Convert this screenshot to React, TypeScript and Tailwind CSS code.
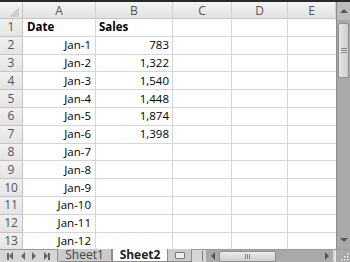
import React from "react";

const cols = ["A", "B", "C", "D", "E"];
const data: [string, string][] = [
  ["Date", "Sales"],
  ["Jan-1", "783"],
  ["Jan-2", "1,322"],
  ["Jan-3", "1,540"],
  ["Jan-4", "1,448"],
  ["Jan-5", "1,874"],
  ["Jan-6", "1,398"],
  ["Jan-7", ""],
  ["Jan-8", ""],
  ["Jan-9", ""],
  ["Jan-10", ""],
  ["Jan-11", ""],
  ["Jan-12", ""],
];

const gridCols = "grid grid-cols-[23px_73px_77px_59px_56px_1fr]";

function HeaderRow() {
  return (
    <div className={`${gridCols} h-[17px] shrink-0 bg-gradient-to-b from-[#f4f4f4] to-[#e2e2e2] border-b border-[#c4c4c4]`}>
      <div className="relative border-r border-[#c4c4c4]">
        <div className="absolute right-[3px] bottom-[3px] w-0 h-0 border-l-[10px] border-l-transparent border-b-[10px] border-b-[#cfcfcf]" />
      </div>
      {cols.map((c) => (
        <div key={c} className="flex items-center justify-center border-r border-[#d0d0d0] text-[#555] text-[12px]">
          {c}
        </div>
      ))}
    </div>
  );
}

function Row({ n, a, b }: { n: number; a: string; b: string }) {
  const head = n === 1;
  return (
    <div className={`${gridCols} h-[17.8px] shrink-0 leading-[14px]`}>
      <div className="flex items-center justify-center bg-gradient-to-b from-[#f0f0f0] to-[#e4e4e4] border-r border-b border-[#c4c4c4] text-[#555] text-[12px]">
        {n}
      </div>
      <div className={`flex items-center px-[4px] border-r border-b border-[#d6d6d6] ${head ? "justify-start font-bold" : "justify-end"}`}>
        {a}
      </div>
      <div className={`flex items-center px-[3px] border-r border-b border-[#d6d6d6] ${head ? "justify-start font-bold" : "justify-end"}`}>
        {b}
      </div>
      <div className="border-r border-b border-[#d6d6d6]" />
      <div className="border-r border-b border-[#d6d6d6]" />
      <div className="border-b border-[#d6d6d6]" />
    </div>
  );
}

function VScroll() {
  return (
    <div className="w-[14px] flex flex-col bg-[#a9a9a9] border-l border-[#8c8c8c]">
      <div className="h-[18px] flex items-center justify-center bg-[#bdbdbd]">
        <div className="w-0 h-0 border-l-[4px] border-r-[4px] border-b-[4px] border-l-transparent border-r-transparent border-b-[#555]" />
      </div>
      <div className="mt-[3px] mx-[1px] h-[55px] rounded-[2px] bg-gradient-to-r from-[#e6e6e6] to-[#cfcfcf] border border-[#8e8e8e] flex flex-col items-center justify-center gap-[1px]">
        <div className="w-[6px] h-px bg-[#888]" />
        <div className="w-[6px] h-px bg-[#888]" />
        <div className="w-[6px] h-px bg-[#888]" />
      </div>
      <div className="flex-1" />
      <div className="h-[18px] flex items-center justify-center">
        <div className="w-0 h-0 border-l-[4px] border-r-[4px] border-t-[4px] border-l-transparent border-r-transparent border-t-[#555]" />
      </div>
    </div>
  );
}

function BottomBar() {
  return (
    <div className="h-[13px] shrink-0 flex bg-[#d6d6d6] border-t border-[#9a9a9a] text-[12px] leading-none">
      <div className="w-[57px] flex items-center justify-around px-[3px] text-[#666]">
        <div className="flex items-center">
          <div className="w-[2px] h-[7px] bg-[#666]" />
          <div className="w-0 h-0 border-t-[4px] border-b-[4px] border-r-[4px] border-t-transparent border-b-transparent border-r-[#666]" />
        </div>
        <div className="w-0 h-0 border-t-[4px] border-b-[4px] border-r-[4px] border-t-transparent border-b-transparent border-r-[#666]" />
        <div className="w-0 h-0 border-t-[4px] border-b-[4px] border-l-[4px] border-t-transparent border-b-transparent border-l-[#666]" />
        <div className="flex items-center">
          <div className="w-0 h-0 border-t-[4px] border-b-[4px] border-l-[4px] border-t-transparent border-b-transparent border-l-[#666]" />
          <div className="w-[2px] h-[7px] bg-[#666]" />
        </div>
      </div>
      <div className="w-[55px] -mt-px flex items-center justify-center bg-[#cbcbcb] border border-t-0 border-[#8d8d8d] rounded-b-[2px] text-[#444]">
        Sheet1
      </div>
      <div className="w-[56px] -mt-px flex items-center justify-center bg-white border border-t-0 border-[#8d8d8d] font-bold text-[#222]">
        Sheet2
      </div>
      <div className="w-[24px] -mt-px flex items-center justify-center bg-[#cbcbcb] border border-t-0 border-l-0 border-[#8d8d8d]">
        <div className="w-[10px] h-[7px] border border-[#777] rounded-[1px] bg-[#eee]" />
      </div>
      <div className="flex-1" />
      <div className="w-px my-[1px] bg-[#777]" />
      <div className="w-[127px] ml-[3px] flex items-center bg-[#a9a9a9]">
        <div className="w-[13px] flex items-center justify-center">
          <div className="w-0 h-0 border-t-[4px] border-b-[4px] border-r-[4px] border-t-transparent border-b-transparent border-r-[#555]" />
        </div>
        <div className="w-[57px] h-[11px] rounded-[2px] bg-gradient-to-b from-[#ececec] to-[#cdcdcd] border border-[#8e8e8e] flex items-center justify-center gap-[1px]">
          <div className="w-px h-[5px] bg-[#888]" />
          <div className="w-px h-[5px] bg-[#888]" />
          <div className="w-px h-[5px] bg-[#888]" />
        </div>
        <div className="flex-1" />
        <div className="w-[13px] flex items-center justify-center">
          <div className="w-0 h-0 border-t-[4px] border-b-[4px] border-l-[4px] border-t-transparent border-b-transparent border-l-[#555]" />
        </div>
      </div>
      <div className="w-px my-[1px] ml-[2px] bg-[#eee]" />
      <div className="w-[14px] bg-[#a9a9a9] flex items-end justify-end p-px">
        <svg width="9" height="9" viewBox="0 0 9 9">
          {[
            [7, 1],
            [4, 4],
            [7, 4],
            [1, 7],
            [4, 7],
            [7, 7],
          ].map(([x, y], i) => (
            <rect key={i} x={x} y={y} width="1.5" height="1.5" fill="#eee" />
          ))}
        </svg>
      </div>
    </div>
  );
}

export default function App() {
  return (
    <div className="w-[350px] h-[262px] overflow-hidden bg-white border-t-2 border-[#2a2a2a] flex flex-col font-['Open_Sans',sans-serif] text-[11.5px] text-black">
      <div className="flex h-[247px] shrink-0">
        <div className="flex-1 flex flex-col overflow-hidden">
          <HeaderRow />
          {data.map(([a, b], i) => (
            <Row key={i} n={i + 1} a={a} b={b} />
          ))}
        </div>
        <VScroll />
      </div>
      <BottomBar />
    </div>
  );
}
